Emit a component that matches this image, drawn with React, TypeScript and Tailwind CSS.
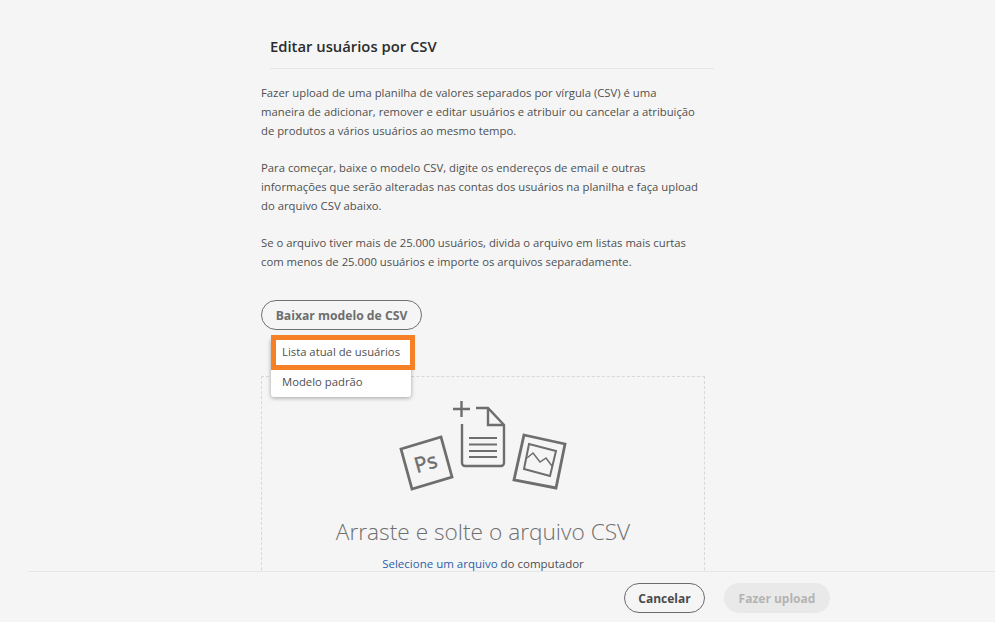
export default function App() {
  return (
    <div className="flex h-[622px] w-[995px] flex-col overflow-hidden bg-[#f5f5f5] font-['Open_Sans','Noto_Sans',sans-serif] text-[#4b4b4b]">
      <main className="relative flex-1 overflow-hidden pl-[261px]">
        <div className="w-[453px]">
          <div className="ml-[9px] border-b border-[#e6e6e6] pb-[11px] pt-[36px]">
            <h1 className="text-[14.8px] font-semibold leading-[21px] text-[#2c2c2c]">Editar usuários por CSV</h1>
          </div>
        </div>

        <div className="mt-[14px] w-[444px] space-y-[18px] whitespace-nowrap text-[11.3px] leading-[19px] text-[#4f4f4f]">
          <p>
            Fazer upload de uma planilha de valores separados por vírgula (CSV) é uma
            <br />
            maneira de adicionar, remover e editar usuários e atribuir ou cancelar a atribuição
            <br />
            de produtos a vários usuários ao mesmo tempo.
          </p>
          <p>
            Para começar, baixe o modelo CSV, digite os endereços de email e outras
            <br />
            informações que serão alteradas nas contas dos usuários na planilha e faça upload
            <br />
            do arquivo CSV abaixo.
          </p>
          <p>
            Se o arquivo tiver mais de 25.000 usuários, divida o arquivo em listas mais curtas
            <br />
            com menos de 25.000 usuários e importe os arquivos separadamente.
          </p>
        </div>

        <button className="mt-[29px] block h-[30px] w-[161px] rounded-full border-[1.5px] border-[#707070] pt-[2px] text-[12.2px] font-bold text-[#6e6e6e]">
          Baixar modelo de CSV
        </button>

        <div className="mt-[46px] flex h-[300px] w-[444px] flex-col items-center border border-dashed border-[#d8d8d8] pt-[17px]">
          <UploadArt />
          <div className="mt-[22px] whitespace-nowrap text-[22.7px] font-light leading-[32px] text-[#6e6e6e]">Arraste e solte o arquivo CSV</div>
          <div className="mt-[7px] text-[11.5px] leading-[17px] text-[#4f4f4f]">
            <span className="text-[#2d5fa8]">Selecione um arquivo</span> do computador
          </div>
        </div>

        {/* dropdown sits over the drop zone */}
        <div className="absolute left-[271px] top-[338px] z-10 h-[59px] w-[140px] rounded-[3px] bg-white shadow-[0_1px_4px_rgba(0,0,0,0.35)]">
          <div className="flex h-[28px] items-center pl-[11px] text-[11.3px] text-[#4f4f4f]">Lista atual de usuários</div>
          <div className="flex h-[33px] items-center pl-[11px] text-[11.3px] text-[#4f4f4f]">Modelo padrão</div>
        </div>
        <div className="absolute left-[271px] top-[335px] z-20 h-[35px] w-[144px] border-[5px] border-[#f58025]" />
      </main>

      <footer className="ml-[28px] flex h-[51px] shrink-0 items-start justify-end gap-[19px] border-t border-[#e6e6e6] bg-[#f5f5f5] pr-[165px] pt-[11px]">
        <button className="h-[30px] w-[81px] rounded-full border-[1.5px] border-[#6b6b6b] pt-[2px] text-[12px] font-bold text-[#4b4b4b]">Cancelar</button>
        <button className="h-[30px] w-[106px] rounded-full bg-[#e9e9e9] pt-[2px] text-[12px] font-bold text-[#b4b4b4]">Fazer upload</button>
      </footer>
    </div>
  );
}

function UploadArt() {
  return (
    <svg width="190" height="100" viewBox="0 0 190 100" fill="none" stroke="#6e6e6e" strokeWidth="2.4" className="ml-[4px] shrink-0">
      <path d="M63 15h17M71.500 7v16" />
      <path d="M86 14h12l16 17v38a3 3 0 0 1-3 3H75a3 3 0 0 1-3-3V30" />
      <path d="M98 14v17h16" />
      <path d="M79 44h28M79 50.500h28M79 57h28M79 63h28" strokeWidth="1.800" />
      <path d="M11 55l40-12 11 40-40 12z" strokeWidth="2.800" />
      <text x="36" y="76" transform="rotate(-16 36 70)" textAnchor="middle" fontSize="21" fontWeight="400" fontFamily="Open Sans, sans-serif" fill="#6e6e6e" stroke="#6e6e6e" strokeWidth="0.500">Ps</text>
      <path d="M134 41l41 9-9 44-42-8z" strokeWidth="2.800" />
      <path d="M139 50l27 7-6 25-26-7z" strokeWidth="2" />
      <path d="M137 64l6-5 7 9 6-4 6 8" strokeWidth="1.500" />
    </svg>
  );
}
